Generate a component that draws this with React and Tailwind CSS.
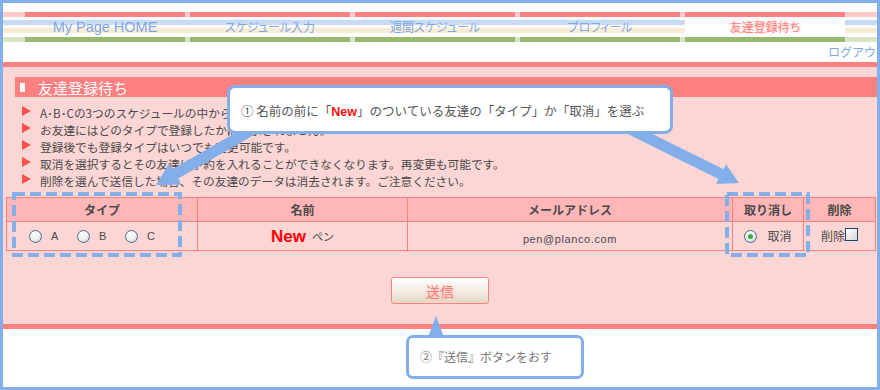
import React from "react";

const arrow = (tx, ty, hx, hy, shaft, headW, headL) => {
  const dx = hx - tx;
  const dy = hy - ty;
  const len = Math.sqrt(dx * dx + dy * dy);
  const ux = dx / len;
  const uy = dy / len;
  const nx = -uy;
  const ny = ux;
  const bx = hx - ux * headL;
  const by = hy - uy * headL;
  const pts = [
    [tx + nx * shaft, ty + ny * shaft],
    [bx + nx * shaft, by + ny * shaft],
    [bx + nx * headW, by + ny * headW],
    [hx, hy],
    [bx - nx * headW, by - ny * headW],
    [bx - nx * shaft, by - ny * shaft],
    [tx - nx * shaft, ty - ny * shaft],
  ];
  return pts.map((p) => p[0].toFixed(1) + "," + p[1].toFixed(1)).join(" ");
};

const bands =
  "bg-[linear-gradient(to_bottom,#ffffff_0px,#ffffff_3px,#c9dbf4_3px,#c9dbf4_8px,#ffffff_8px,#ffffff_11px,#f9ecd4_11px,#f9ecd4_16px,#ffffff_16px)]";

const Spacer = ({ w }) => (
  <div className={`flex flex-col ${w}`}>
    <div className="h-[5px] bg-[#fdcaca]" />
    <div className={`h-[20px] ${bands}`} />
    <div className="h-[5px] bg-[#d7e4c7]" />
  </div>
);

const Tab = ({ children, active, latin }) => (
  <div className="flex flex-col w-[160px]">
    <div className="h-[5px] bg-[#ff8080]" />
    <div
      className={`h-[20px] flex items-center justify-center [font-feature-settings:'palt'] ${active ? "bg-white" : bands}`}
    >
      {latin ? (
        <span className="font-['Liberation_Sans',sans-serif] text-[14.5px] text-[#7ea6e6] leading-none">
          {children}
        </span>
      ) : active ? (
        <span className="text-[12px] text-[#ff8080] leading-none [text-shadow:0_0_3px_rgba(255,150,150,0.6)]">
          {children}
        </span>
      ) : (
        <span className="text-[12px] text-[#7ea6e6] leading-none">{children}</span>
      )}
    </div>
    <div className="h-[5px] bg-[#98b870]" />
  </div>
);

const Radio = ({ checked }) => (
  <span className="inline-flex w-[13px] h-[13px] rounded-full border border-[#4b6a92] bg-[radial-gradient(circle_at_40%_35%,#ffffff_0%,#ececec_55%,#b9b9b9_100%)] items-center justify-center">
    {checked && <span className="w-[5px] h-[5px] rounded-full bg-[#33b040]" />}
  </span>
);

const notes = [
  "A･B･Cの3つのスケジュールの中から、お友達のタイプを選んでください。",
  "お友達にはどのタイプで登録したかは表示されません。",
  "登録後でも登録タイプはいつでも変更可能です。",
  "取消を選択するとその友達は予約を入れることができなくなります。再変更も可能です。",
  "削除を選んで送信した場合、その友達のデータは消去されます。ご注意ください。",
];

export default function App() {
  return (
    <div className="w-[880px] h-[390px] border-[3px] border-[#82aeea] bg-white relative overflow-hidden font-['Noto_Sans_CJK_JP',sans-serif]">
      {/* nav */}
      <div className="pt-[9px] flex">
        <Spacer w="w-[22px]" />
        <Tab latin>My Page HOME</Tab>
        <Spacer w="w-[5px]" />
        <Tab>スケジュール入力</Tab>
        <Spacer w="w-[5px]" />
        <Tab>週間スケジュール</Tab>
        <Spacer w="w-[5px]" />
        <Tab>プロフィール</Tab>
        <Spacer w="w-[5px]" />
        <Tab active>友達登録待ち</Tab>
        <Spacer w="flex-1" />
      </div>

      <div className="h-[20px] flex items-center pl-[825px] whitespace-nowrap">
        <span className="text-[12px] text-[#7ea6e6] leading-none">ログアウト</span>
      </div>

      <div className="h-[5px] bg-[#ff8080]" />

      {/* main pink */}
      <div className="h-[257px] bg-[#fcd5d5] pt-[10px]">
        <div className="ml-[12px] h-[20px] bg-[#ff8080] flex items-center pl-[5px]">
          <span className="w-[5px] h-[9px] bg-white" />
          <span className="ml-[13px] text-[15px] text-white leading-none">友達登録待ち</span>
        </div>

        <ul className="mt-[7px] pl-[19px]">
          {notes.map((n) => (
            <li key={n} className="flex items-start h-[17px]">
              <svg width="9" height="10" viewBox="0 0 9 10" className="mt-[2px] shrink-0">
                <polygon points="0,0 9,5 0,10" fill="#ff4f4f" />
              </svg>
              <span className="ml-[9px] text-[11.7px] leading-[17px] text-[#4a4a4a] whitespace-nowrap">
                {n}
              </span>
            </li>
          ))}
        </ul>

        <table className="mt-[8px] ml-[3px] w-[869px] table-fixed border-collapse text-[#4a4a4a]">
          <colgroup>
            <col className="w-[191px]" />
            <col className="w-[210px]" />
            <col className="w-[325px]" />
            <col className="w-[71px]" />
            <col className="w-[72px]" />
          </colgroup>
          <thead>
            <tr className="h-[24px] bg-[#ffb6b6]">
              {["タイプ", "名前", "メールアドレス", "取り消し", "削除"].map((h) => (
                <th
                  key={h}
                  className="border border-[#ff8080] text-[12px] font-bold leading-none text-center p-0"
                >
                  {h}
                </th>
              ))}
            </tr>
          </thead>
          <tbody>
            <tr className="h-[29px]">
              <td className="border border-[#ff8080] p-0">
                <div className="flex items-center pl-[22px] text-[11px] font-['Liberation_Sans',sans-serif]">
                  <Radio />
                  <span className="ml-[9px] w-[7px]">A</span>
                  <span className="ml-[19px]" />
                  <Radio />
                  <span className="ml-[9px] w-[7px]">B</span>
                  <span className="ml-[19px]" />
                  <Radio />
                  <span className="ml-[9px] w-[7px]">C</span>
                </div>
              </td>
              <td className="border border-[#ff8080] p-0">
                <div className="flex items-center justify-center">
                  <span className="font-['Liberation_Sans',sans-serif] font-bold text-[17px] text-[#ff0000] leading-none">
                    New
                  </span>
                  <span className="ml-[6px] text-[11px] leading-none">ペン</span>
                </div>
              </td>
              <td className="border border-[#ff8080] p-0 text-center">
                <span className="font-['Liberation_Sans',sans-serif] text-[11px] tracking-[0.6px]">
                  pen@planco.com
                </span>
              </td>
              <td className="border border-[#ff8080] p-0">
                <div className="flex items-center justify-center">
                  <Radio checked />
                  <span className="ml-[10px] text-[12px] leading-none">取消</span>
                </div>
              </td>
              <td className="border border-[#ff8080] p-0">
                <div className="flex items-center justify-center">
                  <span className="text-[12px] leading-none">削除</span>
                  <span className="w-[13px] h-[13px] border border-[#1f3f6e] bg-[linear-gradient(135deg,#ffffff,#d8d8d8)] -mt-[4px]" />
                </div>
              </td>
            </tr>
          </tbody>
        </table>

        <button className="mt-[26px] mx-auto flex items-center justify-center w-[98px] h-[27px] border border-[#ff8080] rounded-[3px] bg-[linear-gradient(to_bottom,#ffffff,#e6d9c6)]">
          <span className="text-[14px] text-[#ff7f7f] leading-none [text-shadow:0_0_3px_rgba(255,140,140,0.6)]">
            送信
          </span>
        </button>
      </div>

      <div className="h-[5px] bg-[#ff8080]" />

      {/* overlays */}
      <svg
        width="880"
        height="390"
        viewBox="0 0 880 390"
        className="absolute left-[-3px] top-[-3px] pointer-events-none"
      >
        <rect x="14" y="194" width="166" height="61" fill="none" stroke="#82aeea" strokeWidth="4" strokeDasharray="11 5" />
        <rect x="727" y="194" width="81" height="61" fill="none" stroke="#82aeea" strokeWidth="4" strokeDasharray="11 5" />
        <polygon points={arrow(262, 124, 156, 185, 5.5, 12, 22)} fill="#82aeea" />
        <polygon points={arrow(620, 124, 739, 183, 5.5, 11, 20)} fill="#82aeea" />
        <polygon points="436,316 428,337 444,337" fill="#82aeea" />
      </svg>

      <div className="absolute left-[224px] top-[82px] w-[446px] h-[49px] border-[3px] border-[#82aeea] rounded-[8px] bg-white flex items-center pl-[11px] pt-[5px]">
        <span className="text-[12.5px] text-[#555555] leading-none whitespace-nowrap">
          ① 名前の前に「
          <span className="font-['Liberation_Sans',sans-serif] font-bold text-[#ff1010]">New</span>
          」のついている友達の「タイプ」か「取消」を選ぶ
        </span>
      </div>

      <div className="absolute left-[403px] top-[332px] w-[178px] h-[44px] border-[3px] border-[#82aeea] rounded-[7px] bg-white flex items-center pl-[11px]">
        <span className="text-[12px] text-[#777777] leading-none whitespace-nowrap">
          ②『送信』ボタンをおす
        </span>
      </div>
    </div>
  );
}
